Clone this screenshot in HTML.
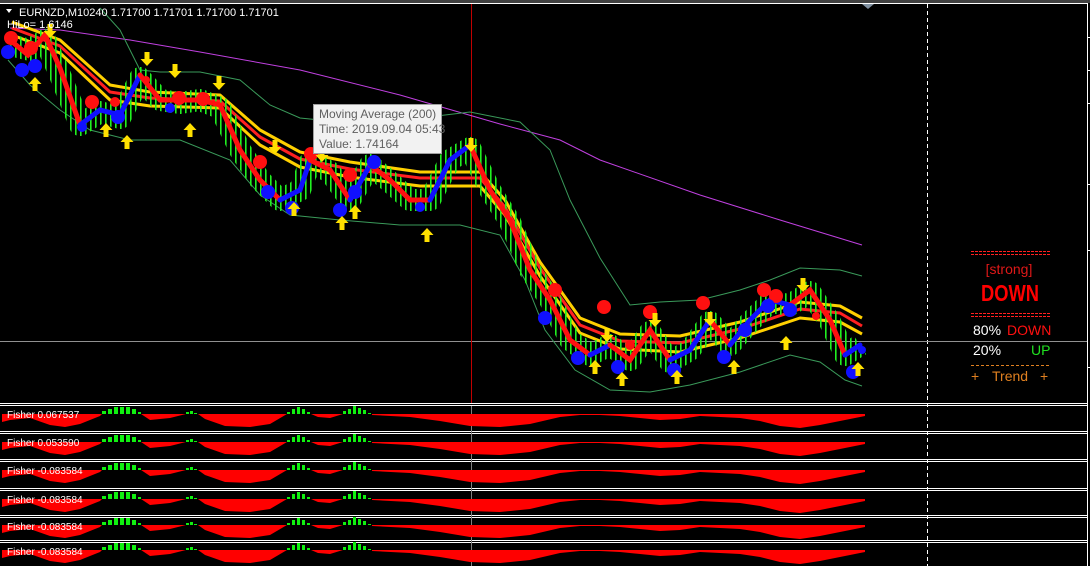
<!DOCTYPE html>
<html><head><meta charset="utf-8"><style>
html,body{margin:0;padding:0;background:#000;width:1090px;height:566px;overflow:hidden}
svg{display:block}
text{font-family:"Liberation Sans",sans-serif}
</style></head><body>
<svg width="1090" height="566" viewBox="0 0 1090 566" xmlns="http://www.w3.org/2000/svg">
<defs>
<pattern id="st" width="5" height="10" patternUnits="userSpaceOnUse"><rect x="0" y="0" width="1.6" height="10" fill="#20f020"/></pattern>
<path id="dn" d="M-2.5,-8 h5 v7 h4 l-6.5,7 l-6.5,-7 h4 z" fill="#ffe000"/>
<path id="up" d="M-2.5,8 h5 v-7 h4 l-6.5,-7 l-6.5,7 h4 z" fill="#ffe000"/>
</defs>
<rect width="1090" height="566" fill="#000"/>
<rect x="0" y="0" width="1090" height="3" fill="#404040"/>
<g fill="none" stroke="#fff" stroke-width="1">
<line x1="0" y1="3.5" x2="1087" y2="3.5"/>
<line x1="1087.5" y1="3" x2="1087.5" y2="566"/>
<line x1="0" y1="403.5" x2="1087" y2="403.5"/><line x1="0" y1="405.5" x2="1087" y2="405.5"/>
<line x1="0" y1="431.5" x2="1087" y2="431.5"/><line x1="0" y1="433.5" x2="1087" y2="433.5"/>
<line x1="0" y1="459.5" x2="1087" y2="459.5"/><line x1="0" y1="461.5" x2="1087" y2="461.5"/>
<line x1="0" y1="488.5" x2="1087" y2="488.5"/><line x1="0" y1="490.5" x2="1087" y2="490.5"/>
<line x1="0" y1="515.5" x2="1087" y2="515.5"/><line x1="0" y1="517.5" x2="1087" y2="517.5"/>
<line x1="0" y1="540.5" x2="1087" y2="540.5"/><line x1="0" y1="542.5" x2="1087" y2="542.5"/>
<line x1="927.5" y1="4" x2="927.5" y2="566" stroke-dasharray="4 3"/>
</g>
<g stroke="#fff"><line x1="1087" y1="37.5" x2="1090" y2="37.5"/><line x1="1087" y1="70.5" x2="1090" y2="70.5"/><line x1="1087" y1="103.5" x2="1090" y2="103.5"/><line x1="1087" y1="184.5" x2="1090" y2="184.5"/><line x1="1087" y1="250.5" x2="1090" y2="250.5"/><line x1="1087" y1="367.5" x2="1090" y2="367.5"/></g>
<polygon points="862,4 874,4 868,9" fill="#8090a0"/>
<line x1="0" y1="341.5" x2="1087" y2="341.5" stroke="#909090"/>
<line x1="471.5" y1="4" x2="471.5" y2="403" stroke="#c00000"/>
<line x1="471.5" y1="406" x2="471.5" y2="566" stroke="#808080"/>
<polyline fill="none" stroke="#c040e0" points="10,28 60,30 130,40 200,52 300,70 400,95 500,124 560,140 600,160 700,195 780,220 862,245"/>
<polyline fill="none" stroke="#3a9a5a" points="100,8 120,30 140,70 160,72 200,72 240,80 270,105 300,118 340,122 380,118 420,118 470,112 520,122 550,150 570,200 600,258 630,305 660,302 700,300 740,290 770,280 800,268 840,270 862,276"/>
<polyline fill="none" stroke="#3a9a5a" points="8,60 30,85 60,110 90,130 130,140 180,140 230,160 260,195 290,215 340,220 400,225 460,225 500,235 525,280 545,330 575,370 610,390 650,392 690,385 740,372 790,355 820,362 845,380 862,386"/>
<g fill="none" stroke-linejoin="round">
<polyline stroke="#ffd000" stroke-width="3" points="12,22 60,40 110,85 150,92 220,95 260,130 300,152 350,162 420,172 480,172 505,200 540,262 580,318 620,334 680,336 740,322 800,302 840,306 862,318"/>
<polyline stroke="#ff2020" stroke-width="3" points="12,28 60,46 110,92 150,98 220,101 260,137 300,159 350,169 420,178 480,178 505,207 540,268 580,325 620,341 680,343 740,329 800,309 840,313 862,326"/>
<polyline stroke="#ffd000" stroke-width="3" points="12,35 60,53 110,100 150,106 220,108 260,145 300,167 350,177 420,186 480,186 505,215 540,276 580,333 620,349 680,352 740,338 800,318 840,322 862,334"/>
</g>
<polyline fill="none" stroke="url(#st)" stroke-width="22" stroke-linejoin="round" points="10,45 30,50 45,40 60,75 80,125 100,112 120,118 140,78 160,100 180,103 200,100 220,108 240,150 260,180 280,200 300,190 310,162 330,172 350,200 370,165 390,182 410,200 430,200 450,160 470,148 490,190 510,222 530,270 550,300 570,340 590,355 610,345 630,360 650,332 670,362 690,350 710,322 730,345 750,322 770,302 790,305 810,292 830,322 845,355 860,345"/>
<g fill="none" stroke-width="5" stroke-linecap="round">
<polyline stroke="#ff1010" points="10,40 28,55 45,35 60,68 80,125"/>
<polyline stroke="#1010ff" points="80,125 100,110 120,115 140,75"/>
<polyline stroke="#ff1010" points="140,75 160,100 200,100 220,105 240,150 260,180 280,200"/>
<polyline stroke="#1010ff" points="280,200 300,190 310,160"/>
<polyline stroke="#ff1010" points="310,160 330,170 350,200"/>
<polyline stroke="#1010ff" points="350,200 370,165"/>
<polyline stroke="#ff1010" points="370,165 390,180 410,200 430,200"/>
<polyline stroke="#1010ff" points="430,200 450,160 470,145"/>
<polyline stroke="#ff1010" points="470,145 490,190 510,220 530,270 550,300 570,340 590,355"/>
<polyline stroke="#1010ff" points="590,355 610,345"/>
<polyline stroke="#ff1010" points="610,345 630,360 650,330 670,360"/>
<polyline stroke="#1010ff" points="670,360 690,350 710,320"/>
<polyline stroke="#ff1010" points="710,320 730,345"/>
<polyline stroke="#1010ff" points="730,345 750,320 770,300 790,305"/>
<polyline stroke="#ff1010" points="790,305 810,290 830,320 845,355"/>
<polyline stroke="#1010ff" points="845,355 860,345"/>
</g>
<g fill="#ff1010">
<circle cx="11" cy="38" r="7"/><circle cx="31" cy="48" r="7"/><circle cx="92" cy="102" r="7"/><circle cx="115" cy="102" r="5"/><circle cx="146" cy="80" r="4"/><circle cx="179" cy="98" r="7"/><circle cx="203" cy="99" r="7"/><circle cx="260" cy="162" r="7"/><circle cx="311" cy="154" r="7"/><circle cx="350" cy="175" r="7"/><circle cx="555" cy="290" r="7"/><circle cx="604" cy="307" r="7"/><circle cx="650" cy="312" r="7"/><circle cx="703" cy="303" r="7"/><circle cx="764" cy="290" r="7"/><circle cx="776" cy="296" r="7"/><circle cx="816" cy="316" r="4"/><circle cx="630" cy="345" r="5"/>
</g>
<g fill="#1010ff">
<circle cx="8" cy="52" r="7"/><circle cx="22" cy="70" r="7"/><circle cx="35" cy="66" r="7"/><circle cx="82" cy="127" r="5"/><circle cx="118" cy="117" r="7"/><circle cx="170" cy="108" r="5"/><circle cx="268" cy="192" r="7"/><circle cx="292" cy="208" r="7"/><circle cx="340" cy="210" r="7"/><circle cx="355" cy="192" r="7"/><circle cx="374" cy="162" r="7"/><circle cx="420" cy="207" r="5"/><circle cx="545" cy="318" r="7"/><circle cx="578" cy="358" r="7"/><circle cx="618" cy="367" r="7"/><circle cx="674" cy="370" r="7"/><circle cx="724" cy="357" r="7"/><circle cx="745" cy="330" r="7"/><circle cx="768" cy="306" r="7"/><circle cx="790" cy="310" r="7"/><circle cx="853" cy="372" r="7"/><circle cx="862" cy="350" r="4"/>
</g>
<g>
<use href="#dn" x="50" y="32"/><use href="#dn" x="147" y="60"/><use href="#dn" x="175" y="72"/><use href="#dn" x="219" y="84"/><use href="#dn" x="275" y="148"/><use href="#dn" x="322" y="156"/><use href="#dn" x="471" y="146"/><use href="#dn" x="607" y="336"/><use href="#dn" x="655" y="321"/><use href="#dn" x="710" y="320"/><use href="#dn" x="803" y="286"/>
<use href="#up" x="35" y="83"/><use href="#up" x="106" y="129"/><use href="#up" x="127" y="141"/><use href="#up" x="190" y="129"/><use href="#up" x="294" y="208"/><use href="#up" x="342" y="222"/><use href="#up" x="355" y="211"/><use href="#up" x="427" y="234"/><use href="#up" x="595" y="366"/><use href="#up" x="622" y="378"/><use href="#up" x="677" y="376"/><use href="#up" x="734" y="366"/><use href="#up" x="786" y="342"/><use href="#up" x="858" y="368"/>
</g>
<rect x="313.5" y="104.5" width="128" height="49" fill="#f2f2f2" stroke="#a0a0a0"/>
<text x="319" y="118" font-size="12" fill="#606060">Moving Average (200)</text>
<text x="319" y="133" font-size="12" fill="#606060">Time: 2019.09.04 05:43</text>
<text x="319" y="148" font-size="12" fill="#606060">Value: 1.74164</text>
<polygon points="6,9 12,9 9,13" fill="#fff"/>
<text x="19" y="16" font-size="11" fill="#fff">EURNZD,M10240  1.71700 1.71701 1.71700 1.71701</text>
<text x="7" y="28" font-size="11" fill="#fff">HiLo= 1.6146</text>
<g stroke-dasharray="3 1" stroke-width="1">
<line x1="971" y1="251.5" x2="1050" y2="251.5" stroke="#ff2020"/><line x1="971" y1="254.5" x2="1050" y2="254.5" stroke="#ff2020"/>
<line x1="971" y1="313.5" x2="1050" y2="313.5" stroke="#ff2020"/><line x1="971" y1="316.5" x2="1050" y2="316.5" stroke="#ff2020"/>
<line x1="971" y1="365.5" x2="1050" y2="365.5" stroke="#e08020" stroke-dasharray="3 2"/>
</g>
<text x="1009" y="274" font-size="14" fill="#e01818" text-anchor="middle">[strong]</text>
<text x="1010" y="301" font-size="23" font-weight="bold" fill="#ff0000" text-anchor="middle" textLength="58" lengthAdjust="spacingAndGlyphs">DOWN</text>
<text x="973" y="335" font-size="14" fill="#fff">80%</text><text x="1007" y="335" font-size="14" fill="#ff1010">DOWN</text>
<text x="973" y="355" font-size="14" fill="#fff">20%</text><text x="1031" y="355" font-size="14" fill="#20e020">UP</text>
<text x="971" y="381" font-size="14" fill="#e08020">+</text><text x="992" y="381" font-size="14" fill="#e08020">Trend</text><text x="1040" y="381" font-size="14" fill="#e08020">+</text>
<g id="f1">
<polygon fill="#ff0000" points="2,414 102,414 100,416 80,424 65,427 50,425 30,418 10,420 2,422"/>
<polygon fill="#ff0000" points="141,414 186,414 170,418 150,420"/>
<polygon fill="#ff0000" points="198,414 287,414 270,424 250,427 225,426 205,419"/>
<polygon fill="#ff0000" points="311,414 343,414 330,418 318,417"/>
<polygon fill="#ff0000" points="372,414 865,414 865,416 840,421 820,425 800,428 780,426 760,421 740,418 720,417 700,416 680,419 660,420 640,418 620,416 600,415 580,415 560,417 530,424 500,427 470,426 440,421 410,417 372,415"/>
<path fill="#10f010" d="M102,414v-3h4v3zM108,414v-5h4v5zM114,414v-7h4v7zM120,414v-7h4v7zM126,414v-7h4v7zM132,414v-5h4v5zM138,414v-2h3v2zM186,414v-2h3v2zM190,414v-3h3v3zM194,414v-1h3v1zM287,414v-2h3v2zM292,414v-5h3v5zM297,414v-7h3v7zM302,414v-5h3v5zM307,414v-2h3v2zM343,414v-3h3v3zM348,414v-5h3v5zM353,414v-8h3v8zM358,414v-6h3v6zM363,414v-4h3v4zM368,414v-1h3v1z"/>
</g>
<use href="#f1" y="28"/>
<use href="#f1" y="56"/>
<use href="#f1" y="85"/>
<use href="#f1" y="111"/>
<use href="#f1" y="136"/>
<g font-size="10" fill="#fff">
<text x="7" y="418">Fisher 0.067537</text>
<text x="7" y="446">Fisher 0.053590</text>
<text x="7" y="474">Fisher -0.083584</text>
<text x="7" y="503">Fisher -0.083584</text>
<text x="7" y="530">Fisher -0.083584</text>
<text x="7" y="555">Fisher -0.083584</text>
</g>
</svg>
</body></html>
